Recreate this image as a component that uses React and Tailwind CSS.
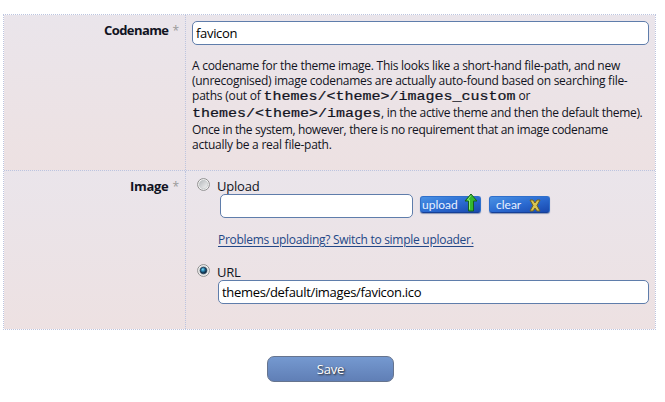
const input = "h-[24px] rounded-[5px] border border-[#5f7dab] bg-white pl-[3px] text-[13px] leading-[23px] tracking-[-0.32px] text-black outline-none";

function Code({ children }) {
  return (
    <b className="inline-block origin-[50%_75%] scale-y-[0.84] font-['Liberation_Mono',monospace] text-[15px] leading-[15px] font-normal tracking-normal [-webkit-text-stroke:0.25px_#111322]">
      {children}
    </b>
  );
}

function Label({ children }) {
  return (
    <div className="w-[182px] shrink-0 border-r border-dotted border-[#bcc4df] pr-[6px] text-right text-[13px] leading-[18px] font-bold">
      {children}
      <span className="ml-[4px] text-[12px] font-normal text-[#999]">*</span>
    </div>
  );
}

function Radio({ checked }) {
  return (
    <svg className="mr-[7px] h-[13px] w-[13px] shrink-0" viewBox="0 0 13 13">
      <defs>
        <linearGradient id="ring" x1="0" y1="0" x2="1" y2="1">
          <stop offset="0" stopColor="#b4b8bb" />
          <stop offset="1" stopColor="#f4f4f4" />
        </linearGradient>
        <radialGradient id="dot" cx="40%" cy="35%">
          <stop offset="0" stopColor="#8be0f5" />
          <stop offset=".5" stopColor="#2582b0" />
          <stop offset="1" stopColor="#10334f" />
        </radialGradient>
      </defs>
      <circle cx="6.5" cy="6.5" r="5.9" fill="#f7f7f7" stroke="#8c8c8c" strokeWidth="1" />
      <circle cx="6.5" cy="6.5" r="4.2" fill="url(#ring)" stroke="#b8bdc0" strokeWidth=".6" />
      {checked && <circle cx="6.5" cy="6.5" r="3.3" fill="url(#dot)" stroke="#162f49" strokeWidth=".7" />}
    </svg>
  );
}

function BlueButton({ label, children }) {
  return (
    <button className="relative flex h-[17px] w-[61px] items-center rounded-[3px] border border-[#2f6fcb] border-b-[#163f96] bg-linear-to-br from-[#4a92e4] via-[#2c6cd2] to-[#1a48ae] text-left font-['Lato',sans-serif] text-[12px] leading-[14px] text-[#e8f1ff] shadow-[0_1px_1px_#8996b5]">
      {label}
      {children}
    </button>
  );
}

export default function App() {
  return (
    <div className="h-[402px] w-[665px] bg-white pt-[14px] pl-[3px] font-['Open_Sans','Noto_Sans',sans-serif] text-[#111322]">
      <div className="w-[653px] border border-dotted border-[#bcc4df]">
        <div className="flex h-[156px] border-b border-dotted border-[#bcc4df] bg-linear-to-b from-[#eae5eb] to-[#ede1e2]">
          <Label><span className="inline-block pt-[6px] tracking-[-0.6px]">Codename</span></Label>
          <div className="pt-[6px] pl-[6px]">
            <input className={input + " block w-[457px]"} defaultValue="favicon" />
            <div className="pt-[13px] text-[12px] leading-[15px] whitespace-nowrap">
              <div className="tracking-[-0.27px]">A codename for the theme image. This looks like a short-hand file-path, and new</div>
              <div className="tracking-[-0.27px]">(unrecognised) image codenames are actually auto-found based on searching file-</div>
              <div className="h-[17px] tracking-[-0.2px]">paths (out of <Code>themes/&lt;theme&gt;/images_custom</Code> or</div>
              <div className="h-[17px] tracking-[-0.3px]"><Code>themes/&lt;theme&gt;/images</Code>, in the active theme and then the default theme).</div>
              <div className="tracking-[-0.36px]">Once in the system, however, there is no requirement that an image codename</div>
              <div className="tracking-[-0.25px]">actually be a real file-path.</div>
            </div>
          </div>
        </div>
        <div className="flex h-[158px] bg-linear-to-b from-[#eae5eb] to-[#ede1e2]">
          <Label><span className="inline-block pt-[6px] tracking-[-0.3px]">Image</span></Label>
          <div className="pt-[7px] pl-[11px] text-[13px]">
            <div className="flex h-[16px] leading-[16px] tracking-[-0.2px]"><Radio />Upload</div>
            <div className="flex pl-[23px]">
              <input className={input + " mr-[7px] w-[193px]"} />
              <div className="flex gap-[8px] pt-[2px]">
                <BlueButton label={<span className="pl-[1px]">upload</span>}>
                  <svg className="absolute -top-[4px] left-[43px] h-[20px] w-[14px]" viewBox="0 0 14 20">
                    <path d="M7 1 13 8H9.5V18H4.5V8H1Z" fill="#35b82e" stroke="#17601c" />
                    <path d="M7 2.5 3.5 7H5.5V16.5" fill="none" stroke="#8cec72" />
                  </svg>
                </BlueButton>
                <BlueButton label={<span className="pl-[6px]">clear</span>}>
                  <svg className="absolute top-[2px] left-[39px] h-[13px] w-[12px]" viewBox="0 0 12 13">
                    <path d="M1 1H4L6 4 8 1H11L8 6.5 11 12H8L6 9 4 12H1L4 6.5Z" fill="#d9c652" stroke="#76651c" />
                  </svg>
                </BlueButton>
              </div>
            </div>
            <a className="mt-[14px] ml-[21px] block h-[16px] w-fit text-[12px] leading-[16px] tracking-[-0.28px] whitespace-nowrap text-[#234786] underline underline-offset-2">Problems uploading? Switch to simple uploader.</a>
            <div className="mt-[16px] flex h-[16px] leading-[16px] tracking-[-0.2px]"><Radio checked />URL</div>
            <input className={input + " ml-[21px] block w-[431px]"} defaultValue="themes/default/images/favicon.ico" />
          </div>
        </div>
      </div>
      <button className="mt-[26px] ml-[264px] block h-[26px] w-[127px] rounded-[7px] border border-[#66748e] bg-linear-to-b from-[#7599d0] to-[#607fb6] text-[13px] leading-[24px] tracking-[-0.2px] text-white [text-shadow:1px_1px_2px_#222]">Save</button>
    </div>
  );
}
